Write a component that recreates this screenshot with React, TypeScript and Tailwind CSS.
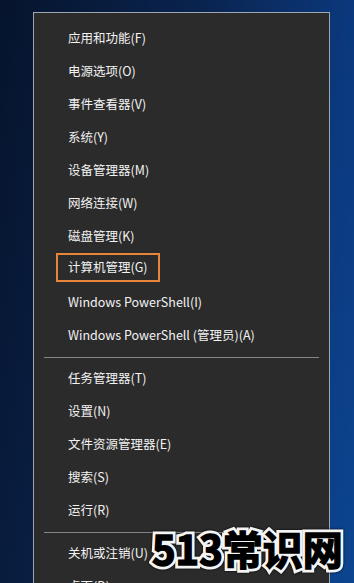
import React from 'react'

type Entry = { label: string } | { sep: true }

const entries: Entry[] = [
  { label: '应用和功能(F)' },
  { label: '电源选项(O)' },
  { label: '事件查看器(V)' },
  { label: '系统(Y)' },
  { label: '设备管理器(M)' },
  { label: '网络连接(W)' },
  { label: '磁盘管理(K)' },
  { label: '计算机管理(G)' },
  { label: 'Windows PowerShell(I)' },
  { label: 'Windows PowerShell (管理员)(A)' },
  { sep: true },
  { label: '任务管理器(T)' },
  { label: '设置(N)' },
  { label: '文件资源管理器(E)' },
  { label: '搜索(S)' },
  { label: '运行(R)' },
  { sep: true },
  { label: '关机或注销(U)' },
  { label: '桌面(D)' },
]

export default function App() {
  return (
    <div
      className="relative w-[354px] h-[583px] overflow-hidden pt-[12px] pl-[33px] bg-[linear-gradient(100deg,#06142c_0%,#0a2450_45%,#0b3a80_80%,#0c4590_100%)]"
      style={{ fontFamily: '"Noto Sans CJK SC", "Noto Sans", sans-serif' }}
    >
      <div className="w-[297px] border border-[#9ea7b0] bg-[#2b2b2b] pt-[9px] pb-[20px]">
        {entries.map((e, i) =>
          'sep' in e ? (
            <div key={i} className="h-[10px] flex items-center px-[10px]">
              <div className="h-px w-full bg-[#858585]" />
            </div>
          ) : (
            <div key={i} className="h-[33px] flex items-center pl-[34px] text-[12.5px] text-[#f2f2f2]">
              {e.label === '计算机管理(G)' ? (
                <span className="-ml-[12px] -mt-[4px] px-[10px] py-[3px] border-2 border-[#e8853c]">{e.label}</span>
              ) : (
                <span>{e.label}</span>
              )}
            </div>
          )
        )}
      </div>

      {/* watermark: white outline under a black fill */}
      <div
        className="absolute left-[152px] top-[528px] text-[40px] font-bold leading-none"
        style={{ fontFamily: '"Noto Sans CJK SC", sans-serif' }}
      >
        <span className="block text-white [-webkit-text-stroke:7px_#f4f4f4] drop-shadow-[0_0_1px_#000]">513常识网</span>
        <span className="absolute inset-0 block text-black [-webkit-text-stroke:1.5px_#000]">513常识网</span>
      </div>
    </div>
  )
}
